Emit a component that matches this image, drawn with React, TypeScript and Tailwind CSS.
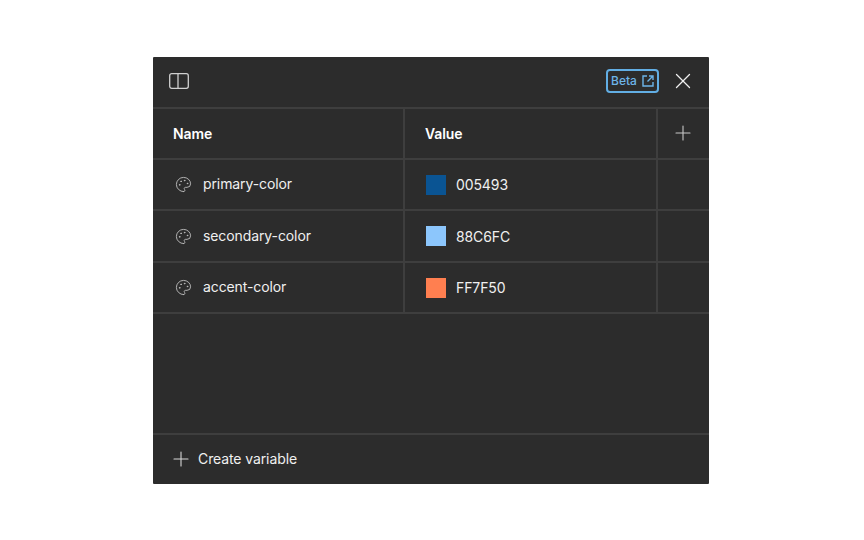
import { Palette, Plus, X } from "lucide-react"

const variables = [
  { name: "primary-color", value: "005493", swatch: "bg-[#0a5493]", height: "h-[51px]" },
  { name: "secondary-color", value: "88C6FC", swatch: "bg-[#8cc6fc]", height: "h-[52px]" },
  { name: "accent-color", value: "FF7F50", swatch: "bg-[#ff7f50]", height: "h-[51px]" },
]

function Row({ name, value, swatch, height }: { name: string; value: string; swatch: string; height: string }) {
  return (
    <div className={`flex border-b-2 border-[#3e3e3e] ${height}`}>
      <div className="flex w-[252px] items-center gap-[11px] border-r-2 border-[#3e3e3e] pl-[22px]">
        <Palette size={17} strokeWidth={1.3} className="text-[#bdbdbd]" />
        <span className="pb-[2px] text-[14px] tracking-[-0.1px] text-[#f0f0f0]">{name}</span>
      </div>
      <div className="flex w-[253px] items-center gap-[10px] border-r-2 border-[#3e3e3e] pl-[21px]">
        <div className={`h-[20px] w-[20px] ${swatch}`} />
        <span className="text-[14px] tracking-[-0.1px] text-[#f0f0f0]">{value}</span>
      </div>
    </div>
  )
}

export default function App() {
  return (
    <div className="flex h-[540px] w-[864px] items-start bg-white pl-[153px] pt-[57px] font-['Inter',sans-serif]">
      <div className="flex h-[427px] w-[556px] flex-col rounded-[1px] bg-[#2c2c2c]">
        <div className="flex h-[52px] items-center justify-between border-b-2 border-[#3e3e3e] pb-[3px] pl-[16px] pr-[13px]">
          <svg width="20" height="16" viewBox="0 0 20 16" fill="none" stroke="#d0d0d0" strokeWidth="1.3">
            <rect x="0.7" y="0.7" width="18.6" height="14.6" rx="2" />
            <path d="M9 0.7v14.6" />
          </svg>
          <div className="flex items-center gap-[11px]">
            <div className="flex h-[24px] w-[53px] items-center justify-center gap-[5px] rounded-[4px] border-2 border-[#62aee4] text-[12px] font-medium text-[#6cb4e8]">
              Beta
              <svg width="12" height="12" viewBox="0 0 12 12" fill="none" stroke="#6cb4e8" strokeWidth="1.4">
                <path d="M5 1H1v10h10V7" />
                <path d="M7 1h4v4M11 1L5.5 6.5" />
              </svg>
            </div>
            <X size={26} strokeWidth={1.2} className="text-[#f0f0f0]" />
          </div>
        </div>
        <div className="flex h-[51px] border-b-2 border-[#3e3e3e]">
          <div className="flex w-[252px] items-center border-r-2 border-[#3e3e3e] pl-[20px] text-[14px] font-semibold tracking-[-0.1px] text-white">
            Name
          </div>
          <div className="flex w-[253px] items-center border-r-2 border-[#3e3e3e] pl-[20px] text-[14px] font-semibold tracking-[-0.1px] text-white">
            Value
          </div>
          <div className="flex flex-1 items-center justify-center pb-[1px] pr-[1px]">
            <Plus size={24} strokeWidth={1.1} className="text-[#c8c8c8]" />
          </div>
        </div>
        {variables.map((v) => (
          <Row key={v.name} {...v} />
        ))}
        <div className="flex-1" />
        <div className="flex h-[51px] items-center gap-[5px] border-t-2 border-[#3e3e3e] pb-[2px] pl-[16px] text-[14px] tracking-[-0.1px] text-[#f0f0f0]">
          <Plus size={24} strokeWidth={1.1} className="text-[#d8d8d8]" />
          Create variable
        </div>
      </div>
    </div>
  )
}
